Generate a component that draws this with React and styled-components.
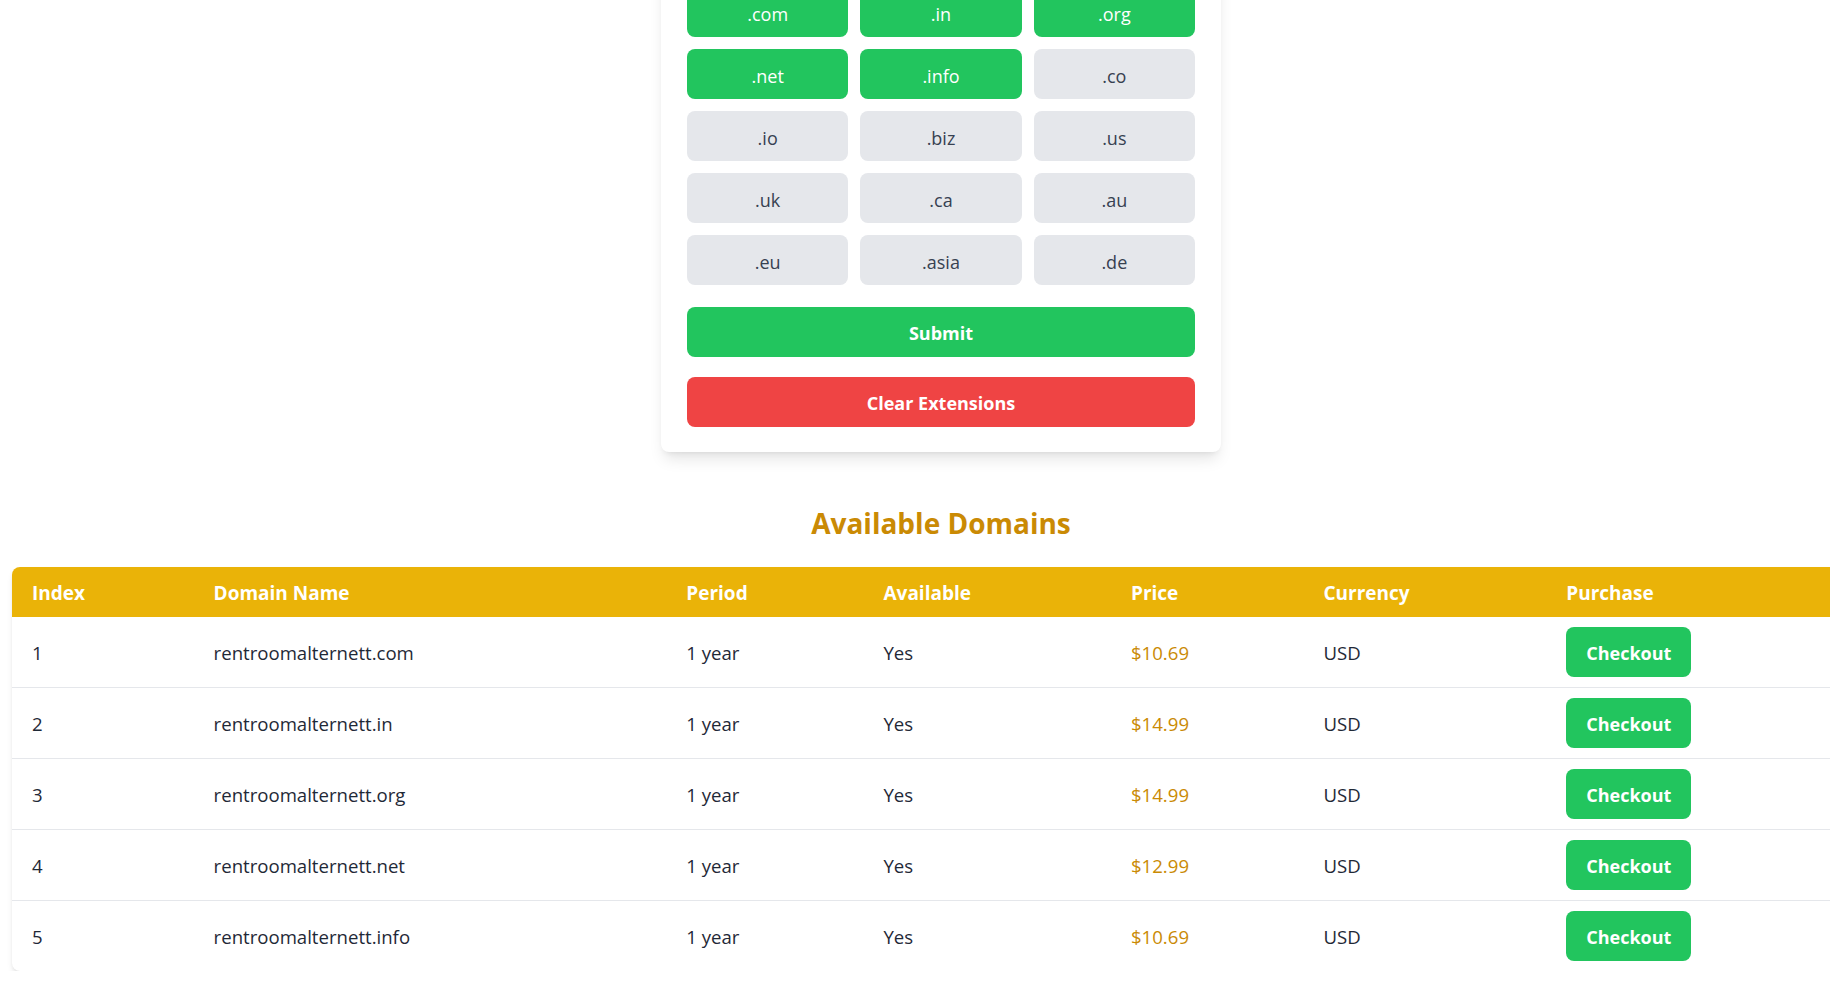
import React from "react";
import styled, { createGlobalStyle } from "styled-components";

const GlobalStyle = createGlobalStyle`
  html, body {
    margin: 0;
    padding: 0;
    background: #ffffff;
    overflow: hidden;
  }
  body {
    font-family: "Open Sans", "Noto Sans", sans-serif;
    color: #1f2937;
  }
  * { box-sizing: border-box; }
`;

const Page = styled.div`
  width: 1882px;
  padding: 0 12px;
  display: flex;
  flex-direction: column;
  align-items: center;
`;

const Card = styled.div`
  width: 560px;
  margin-top: -38px;
  padding: 25px 26px 25px;
  background: #ffffff;
  border-radius: 8px;
  box-shadow: 0 10px 15px -3px rgba(0, 0, 0, 0.1), 0 4px 6px -4px rgba(0, 0, 0, 0.1);
  display: flex;
  flex-direction: column;
`;

const ExtGrid = styled.div`
  display: grid;
  grid-template-columns: repeat(3, 1fr);
  gap: 12px;
`;

const ExtButton = styled.button`
  height: 50px;
  padding: 3px 0 0;
  border: none;
  border-radius: 8px;
  font-family: inherit;
  font-size: 18px;
  background: ${(p) => (p.$active ? "#22c55e" : "#e5e7eb")};
  color: ${(p) => (p.$active ? "#ffffff" : "#374151")};
  cursor: pointer;
`;

const ActionButton = styled.button`
  height: 50px;
  padding: 2px 0 0;
  margin-top: ${(p) => p.$gap}px;
  border: none;
  border-radius: 8px;
  font-family: inherit;
  font-size: 18px;
  font-weight: 700;
  color: #ffffff;
  background: ${(p) => p.$bg};
  cursor: pointer;
`;

const Heading = styled.h2`
  margin: 53px 0 0;
  font-size: 28px;
  line-height: 36px;
  font-weight: 700;
  color: #ca8a04;
  text-align: center;
`;

const TableCard = styled.div`
  width: 100%;
  margin-top: 26px;
  background: #ffffff;
  border-radius: 8px;
  overflow: hidden;
  box-shadow: 0 4px 6px -1px rgba(0, 0, 0, 0.1), 0 2px 4px -2px rgba(0, 0, 0, 0.1);
`;

const Table = styled.table`
  width: 100%;
  border-collapse: collapse;
  table-layout: fixed;
`;

const Col = styled.col`
  width: ${(p) => p.$w}px;
`;

const HeadRow = styled.tr`
  background: #eab308;
`;

const Th = styled.th`
  padding: 13px 20px 11px;
  height: 50px;
  text-align: left;
  font-size: 19px;
  line-height: 26px;
  font-weight: 700;
  color: #ffffff;
`;

const Row = styled.tr`
  border-bottom: ${(p) => (p.$last ? "none" : "1px solid #e5e7eb")};
`;

const Td = styled.td`
  padding: 11px 20px 9px;
  height: 70px;
  font-size: 18.6px;
  line-height: 26px;
  color: ${(p) => p.$color || "#1f2937"};
  vertical-align: middle;
`;

const ButtonCell = styled.td`
  padding: 10px 20px;
  height: 70px;
  vertical-align: middle;
`;

const Checkout = styled.button`
  height: 50px;
  padding: 2px 20px 0;
  border: none;
  border-radius: 8px;
  background: #22c55e;
  color: #ffffff;
  font-family: inherit;
  font-size: 18px;
  font-weight: 700;
  cursor: pointer;
`;

const exts = [
  [".com", true], [".in", true], [".org", true],
  [".net", true], [".info", true], [".co", false],
  [".io", false], [".biz", false], [".us", false],
  [".uk", false], [".ca", false], [".au", false],
  [".eu", false], [".asia", false], [".de", false],
];

const rows = [
  ["1", "rentroomalternett.com", "$10.69"],
  ["2", "rentroomalternett.in", "$14.99"],
  ["3", "rentroomalternett.org", "$14.99"],
  ["4", "rentroomalternett.net", "$12.99"],
  ["5", "rentroomalternett.info", "$10.69"],
];

const widths = [181.6, 472.7, 197.2, 247.5, 192.5, 242.8, 323.7];
const heads = ["Index", "Domain Name", "Period", "Available", "Price", "Currency", "Purchase"];

export default function App() {
  return (
    <>
      <GlobalStyle />
      <Page>
        <Card>
          <ExtGrid>
            {exts.map(([name, active]) => (
              <ExtButton key={name} $active={active}>{name}</ExtButton>
            ))}
          </ExtGrid>
          <ActionButton $bg="#22c55e" $gap={22}>Submit</ActionButton>
          <ActionButton $bg="#ef4444" $gap={20}>Clear Extensions</ActionButton>
        </Card>
        <Heading>Available Domains</Heading>
        <TableCard>
          <Table>
            <colgroup>
              {widths.map((w, i) => <Col key={i} $w={w} />)}
            </colgroup>
            <thead>
              <HeadRow>
                {heads.map((h) => <Th key={h}>{h}</Th>)}
              </HeadRow>
            </thead>
            <tbody>
              {rows.map(([idx, name, price], i) => (
                <Row key={idx} $last={i === rows.length - 1}>
                  <Td>{idx}</Td>
                  <Td>{name}</Td>
                  <Td>1 year</Td>
                  <Td>Yes</Td>
                  <Td $color="#ca8a04">{price}</Td>
                  <Td>USD</Td>
                  <ButtonCell><Checkout>Checkout</Checkout></ButtonCell>
                </Row>
              ))}
            </tbody>
          </Table>
        </TableCard>
      </Page>
    </>
  );
}
